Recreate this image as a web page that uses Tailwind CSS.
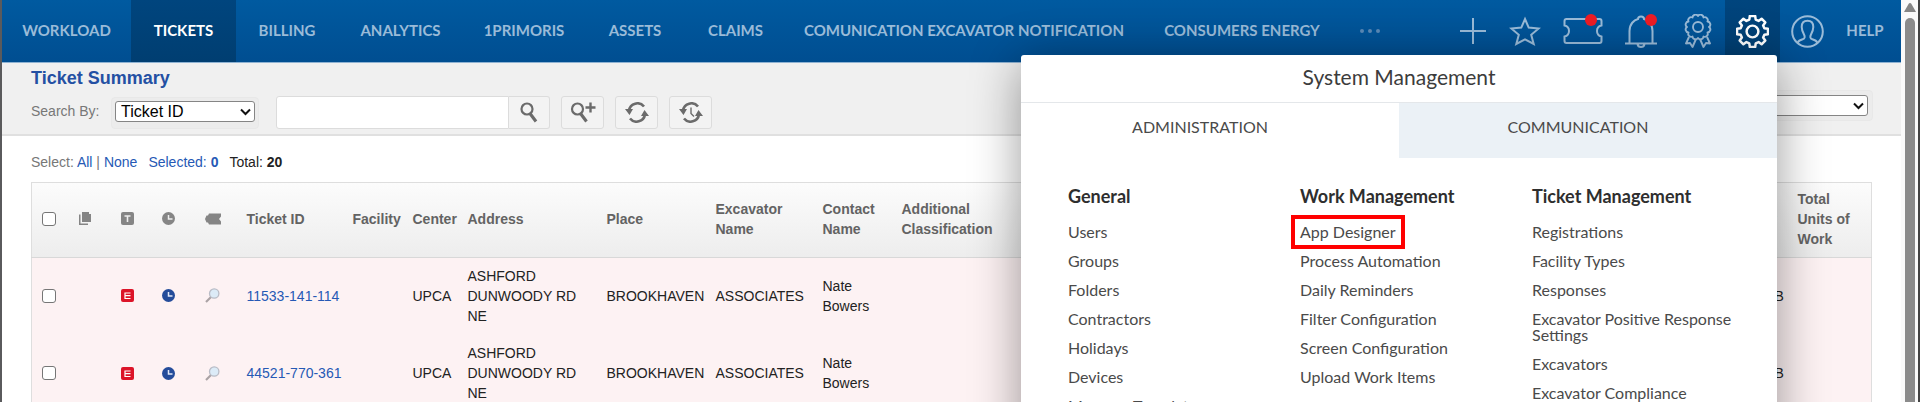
<!DOCTYPE html>
<html lang="en">
<head>
  <meta charset="UTF-8" />
  <meta name="viewport" content="width=device-width, initial-scale=1.0" />
  <title>Ticket Summary</title>
  <script src="https://cdn.jsdelivr.net/npm/@tailwindcss/browser@4"></script>
</head>
<body class="flex h-screen overflow-hidden bg-white text-sm text-[#222] font-['Liberation_Sans',Arial,sans-serif]">
  <div class="w-[2px] shrink-0 bg-[#5a5a5c]"></div>

  <div class="relative flex flex-col min-w-0 grow overflow-hidden">
    <header class="flex shrink-0 h-[63px] border-b border-[#8fb3d3] bg-linear-to-b from-[#005aa0] to-[#004e91] text-[#9abbd8] text-[15px] font-bold font-['Lato',sans-serif]">
      <nav class="flex whitespace-nowrap">
        <a href="#" class="flex items-center justify-center w-[129px]">WORKLOAD</a>
        <a href="#" class="flex items-center justify-center w-[105px] bg-linear-to-b from-[#00457e] to-[#003e71] text-white">TICKETS</a>
        <a href="#" class="flex items-center justify-center w-[102px]">BILLING</a>
        <a href="#" class="flex items-center justify-center w-[125px]">ANALYTICS</a>
        <a href="#" class="flex items-center justify-center w-[122px]">1PRIMORIS</a>
        <a href="#" class="flex items-center justify-center w-[100px]">ASSETS</a>
        <a href="#" class="flex items-center justify-center w-[101px]">CLAIMS</a>
        <a href="#" class="flex items-center justify-center w-[356px]">COMUNICATION EXCAVATOR NOTIFICATION</a>
        <a href="#" class="flex items-center justify-center w-[200px]">CONSUMERS ENERGY</a>
        <button aria-label="More" class="flex items-center justify-center gap-1 w-[56px]">
          <span class="size-1 rounded-full bg-[#5b8ab8]"></span>
          <span class="size-1 rounded-full bg-[#5b8ab8]"></span>
          <span class="size-1 rounded-full bg-[#5b8ab8]"></span>
        </button>
      </nav>
      <div class="flex ml-auto pr-[6px]">
        <button aria-label="Add" class="flex items-center justify-center w-[47px]">
          <svg class="w-[26px] h-[26px]" viewBox="0 0 26 26" fill="none" stroke="currentColor" stroke-width="2"><path d="M13 0v26M0 13h26" /></svg>
        </button>
        <button aria-label="Favorites" class="flex items-center justify-center w-[58px]">
          <svg class="w-[32px] h-[30px]" viewBox="0 0 32 30" fill="none" stroke="currentColor" stroke-width="2"><path d="M16 3l3.700 8.600 10 .9-7.500 6.300 2.500 9.200L16 23.300 7.300 28l2.500-9.200-7.500-6.300 10-.9z" /></svg>
        </button>
        <button aria-label="Tickets" class="relative flex items-center justify-center w-[58px]">
          <svg class="w-[40px] h-[28px]" viewBox="0 0 40 28" fill="none" stroke="currentColor" stroke-width="2"><path d="M3.500 2h33q2 0 2 2v4.500q-4.500 1-4.500 5.500t4.500 5.500V24q0 2-2 2h-33q-2 0-2-2v-4.500q4.500-1 4.500-5.500T1.500 8.500V4q0-2 2-2z" /></svg>
          <span class="absolute top-[14px] left-[31px] size-[12px] rounded-full bg-[#ee1c25]"></span>
        </button>
        <button aria-label="Notifications" class="relative flex items-center justify-center w-[58px]">
          <svg class="w-[32px] h-[33px]" viewBox="0 0 32 33" fill="none" stroke="currentColor" stroke-width="2"><path d="M0 28.500h32M4.500 28V16C4.500 9 9 5 13 4q0-2.500 3-2.500T19 4c4 1 8.500 5 8.500 12v12M12.500 29q.5 3 3.500 3t3.500-3" /></svg>
          <span class="absolute top-[14px] left-[33px] size-[12px] rounded-full bg-[#ee1c25]"></span>
        </button>
        <button aria-label="Certifications" class="flex items-center justify-center w-[55px]">
          <svg class="w-[28px] h-[34px]" viewBox="0 0 28 34" fill="none" stroke="currentColor" stroke-width="1.900" stroke-linejoin="round">
            <path d="M14 2a3 3 0 0 1 5.500 1.500 3 3 0 0 1 4 4A3 3 0 0 1 25 13a3 3 0 0 1-1.500 5.500 3 3 0 0 1-4 4A3 3 0 0 1 14 24a3 3 0 0 1-5.500-1.500 3 3 0 0 1-4-4A3 3 0 0 1 3 13a3 3 0 0 1 1.500-5.500 3 3 0 0 1 4-4A3 3 0 0 1 14 2z" />
            <circle cx="14" cy="13" r="5" />
            <path d="M5 23l-3 6.500 4-.5 2.500 4 3.500-8M23 23l3 6.500-4-.5-2.500 4-3.500-8" />
          </svg>
        </button>
        <button aria-label="System management" class="flex items-center justify-center w-[55px] bg-linear-to-b from-[#00457e] to-[#003e71] text-white">
          <svg class="w-[33px] h-[33px]" viewBox="0 0 32 32" fill="none" stroke="currentColor" stroke-width="2.400" stroke-linejoin="round">
            <path d="M13.400 1h5.200l.5 3.500 2.800 1.200 2.900-2.100 3.600 3.600-2.100 2.900 1.200 2.800 3.500.5v5.200l-3.500.5-1.200 2.800 2.100 2.900-3.600 3.600-2.900-2.100-2.800 1.200-.5 3.500h-5.200l-.5-3.500-2.800-1.200-2.900 2.100-3.600-3.600 2.100-2.900-1.200-2.800L1 18.600v-5.200l3.500-.5 1.200-2.800-2.100-2.900 3.600-3.600 2.900 2.100 2.800-1.200z" />
            <circle cx="16" cy="16" r="5.700" />
          </svg>
        </button>
        <button aria-label="Account" class="flex items-center justify-center w-[55px]">
          <svg class="w-[33px] h-[33px]" viewBox="0 0 33 33" fill="none" stroke="currentColor" stroke-width="2">
            <circle cx="16.500" cy="16.500" r="15.300" />
            <path d="M6.500 28c1-2.500 3-3.300 5.200-3.800 2.400-.6 2.300-2.700 1.300-4.700-1.600-3-2.300-5-2.300-7.500 0-4 2.300-6.200 5.800-6.200s5.800 2.200 5.800 6.200c0 2.500-.7 4.500-2.300 7.500-1 2-1.100 4.100 1.300 4.700 2.200.5 4.200 1.300 5.200 3.800" />
          </svg>
        </button>
        <a href="#" class="flex items-center justify-center w-[60px]">HELP</a>
      </div>
    </header>

    <section class="flex justify-between shrink-0 h-[73px] pl-[29px] pr-[28px] border-b-2 border-[#e0e0e0] bg-[#f0f0f0]">
      <div>
        <h1 class="pt-[3px] text-lg leading-6 font-bold text-[#2450a3]">Ticket Summary</h1>
        <div class="flex items-center mt-[6px]">
          <label for="searchBy" class="w-[80px] pb-1 text-[#777]">Search By:</label>
          <div class="w-[148px] h-[32px] p-[3px] border border-[#e8e8e8] rounded-sm bg-[#ececec]">
            <div class="relative">
              <select id="searchBy" class="appearance-none block w-full h-[21px] pl-[5px] text-base leading-[19px] text-black bg-white border border-[#858585] rounded-[3px]">
                <option>Ticket ID</option>
              </select>
              <svg class="absolute right-1 top-[7px] w-[11px] h-[8px] pointer-events-none" viewBox="0 0 11 8" fill="none" stroke="#111" stroke-width="2"><path d="M1 1.500l4.500 4.500L10 1.500" /></svg>
            </div>
          </div>
          <input type="text" aria-label="Search text" class="w-[233px] h-[33px] ml-[17px] px-2 bg-white border border-[#dcdcdc] rounded-l-[3px]" />
          <button aria-label="Search" class="flex items-center justify-center w-[41px] h-[33px] border border-l-0 border-[#dcdcdc] rounded-r-[3px] bg-[#f3f3f3]">
            <svg class="w-[18px] h-[21px]" viewBox="0 0 18 21" fill="none" stroke="#6b6b6b" stroke-width="2.200"><circle cx="7" cy="7" r="5.500" /><path d="M10 11.500l6 8" stroke-width="3.200" /></svg>
          </button>
          <button aria-label="Advanced search" class="flex items-center justify-center w-[43px] h-[33px] ml-[11px] border border-[#dcdcdc] rounded-[3px] bg-[#f3f3f3]">
            <svg class="w-[26px] h-[21px]" viewBox="0 0 26 21" fill="none" stroke="#6b6b6b" stroke-width="2.200"><circle cx="7.500" cy="7" r="5.500" /><path d="M10.500 11.500l6 8" stroke-width="3.200" /><path d="M20.500 .5v10M15.500 5.500h10" stroke-width="2.400" /></svg>
          </button>
          <button aria-label="Refresh" class="flex items-center justify-center w-[43px] h-[33px] ml-[11px] border border-[#dcdcdc] rounded-[3px] bg-[#f3f3f3]">
            <svg class="w-[24px] h-[21px]" viewBox="0 0 24 21" fill="none" stroke="#6b6b6b" stroke-width="2.600"><path d="M4 8.500a8.500 8.500 0 0 1 15-4M20 12.500a8.500 8.500 0 0 1-15 4" /><path d="M0 7h8l-3.500 6zM24 14h-8l3.500-6z" fill="#6b6b6b" stroke="none" /></svg>
          </button>
          <button aria-label="Auto refresh" class="flex items-center justify-center w-[43px] h-[33px] ml-[11px] border border-[#dcdcdc] rounded-[3px] bg-[#f3f3f3]">
            <svg class="w-[24px] h-[21px]" viewBox="0 0 24 21" fill="none" stroke="#6b6b6b" stroke-width="2.600"><path d="M4 8.500a8.500 8.500 0 0 1 15-4M20 12.500a8.500 8.500 0 0 1-15 4" /><path d="M0 7h8l-3.500 6zM24 14h-8l3.500-6z" fill="#6b6b6b" stroke="none" /><path d="M12 5.500v6l3 3" stroke-width="1.400" /></svg>
          </button>
        </div>
      </div>
      <div class="w-[240px] h-[31px] mt-[27px] p-1 border border-[#e8e8e8] rounded-sm bg-[#ececec]">
        <div class="relative">
          <select aria-label="Saved view" class="appearance-none block w-full h-[21px] bg-white border border-[#858585] rounded-[3px]"><option></option></select>
          <svg class="absolute right-1 top-[7px] w-[11px] h-[8px] pointer-events-none" viewBox="0 0 11 8" fill="none" stroke="#111" stroke-width="2"><path d="M1 1.500l4.500 4.500L10 1.500" /></svg>
        </div>
      </div>
    </section>

    <main class="px-[29px]">
      <p class="flex gap-[11px] pt-4 pb-[10px] leading-5">
        <span class="text-[#777]">Select: <a href="#" class="text-[#2659b5]">All</a> | <a href="#" class="text-[#2659b5]">None</a></span>
        <a href="#" class="text-[#2659b5]">Selected: <b>0</b></a>
        <span>Total: <b>20</b></span>
      </p>

      <table class="w-full table-fixed border-collapse border border-[#dedede] text-left leading-5">
        <colgroup>
          <col class="w-[42px]" />
          <col class="w-[42px]" />
          <col class="w-[41px]" />
          <col class="w-[43px]" />
          <col class="w-[42px]" />
          <col class="w-[106px]" />
          <col class="w-[60px]" />
          <col class="w-[55px]" />
          <col class="w-[139px]" />
          <col class="w-[109px]" />
          <col class="w-[107px]" />
          <col class="w-[79px]" />
          <col class="w-[134px]" />
          <col />
          <col class="w-[69px]" />
          <col class="w-[79px]" />
        </colgroup>
        <thead>
          <tr class="h-[75px] border-b border-[#d8d8d8] bg-linear-to-b from-[#fcfcfc] to-[#ededed] text-[#636363]">
            <th class="pb-[3px] pl-[10px]"><input type="checkbox" aria-label="Select all" class="appearance-none block size-[14px] bg-white border border-[#767676] rounded-[3px]" /></th>
            <th class="pb-[3px] pl-[5px]"><svg class="size-[13px]" viewBox="0 0 13 13" fill="#858585"><path d="M3 0h7v2h2v8H3zM0 2.500h1.500v9H9V13H0z" /></svg></th>
            <th class="pb-[3px] pl-[5px]"><svg class="size-[13px]" viewBox="0 0 13 13"><rect width="13" height="13" rx="2" fill="#858585" /><path d="M3.500 4h6M6.500 4v6" stroke="#eee" stroke-width="1.600" /></svg></th>
            <th class="pb-[3px] pl-[5px]"><svg class="size-[13px]" viewBox="0 0 13 13"><circle cx="6.500" cy="6.500" r="6.500" fill="#858585" /><path d="M6.500 3v4h4" fill="none" stroke="#eee" stroke-width="1.500" /></svg></th>
            <th class="pb-[3px] pl-[5px]"><svg class="w-[16px] h-[12px]" viewBox="0 0 16 12" fill="#858585"><path d="M4 .5h12v3L14 6l2 2.500v3H4l-1-2H1.500L0 6l1.500-3.500H3z" /></svg></th>
            <th class="pb-[3px] pl-[5px]">Ticket ID</th>
            <th class="pb-[3px] pl-[5px]">Facility</th>
            <th class="pb-[3px] pl-[5px]">Center</th>
            <th class="pb-[3px] pl-[5px]">Address</th>
            <th class="pb-[3px] pl-[5px]">Place</th>
            <th class="pb-[3px] pl-[5px]">Excavator Name</th>
            <th class="pb-[3px] pl-[5px]">Contact Name</th>
            <th class="pb-[3px] pl-[5px]">Additional Classification</th>
            <th></th>
            <th class="pb-[3px] pl-[5px]">County</th>
            <th class="pb-[3px] pl-[5px] pr-2">Total Units of Work</th>
          </tr>
        </thead>
        <tbody>
          <tr class="h-[78px] bg-[#fdf2f3]">
            <td class="pb-[2px] pl-[10px]"><input type="checkbox" aria-label="Select 11533-141-114" class="appearance-none block size-[14px] bg-white border border-[#767676] rounded-[3px]" /></td>
            <td></td>
            <td class="pb-[2px] pl-[5px]"><svg class="size-[13px]" viewBox="0 0 13 13"><rect width="13" height="13" rx="2" fill="#dc1428" /><path d="M9.500 4H4v5.500h5.500M4 6.700h5.500" fill="none" stroke="#fff" stroke-width="1.200" /></svg></td>
            <td class="pb-[2px] pl-[5px]"><svg class="size-[13px]" viewBox="0 0 13 13"><circle cx="6.500" cy="6.500" r="6.500" fill="#244c9a" /><path d="M6.500 3v4h4" fill="none" stroke="#dfe8f8" stroke-width="1.500" /></svg></td>
            <td class="pb-[2px] pl-[5px]"><svg class="size-[15px]" viewBox="0 0 15 15"><path d="M6 9l-5 5" stroke="#aaa2a4" stroke-width="2.200" /><circle cx="9.200" cy="5.500" r="4.700" fill="#dcebf7" stroke="#b9bcc6" stroke-width="1.300" /></svg></td>
            <td class="pb-[2px] pl-[5px]"><a href="#" class="text-[#2659b5]">11533-141-114</a></td>
            <td></td>
            <td class="pb-[2px] pl-[5px]">UPCA</td>
            <td class="pb-[2px] pl-[5px] pr-5">ASHFORD DUNWOODY RD NE</td>
            <td class="pb-[2px] pl-[5px]">BROOKHAVEN</td>
            <td class="pb-[2px] pl-[5px]">ASSOCIATES</td>
            <td class="pb-[2px] pl-[5px] pr-3">Nate Bowers</td>
            <td></td>
            <td></td>
            <td class="pb-[2px] pl-[5px]">DEKALB</td>
            <td></td>
          </tr>
          <tr class="h-[78px] bg-[#fdf2f3]">
            <td class="pb-[2px] pl-[10px]"><input type="checkbox" aria-label="Select 44521-770-361" class="appearance-none block size-[14px] bg-white border border-[#767676] rounded-[3px]" /></td>
            <td></td>
            <td class="pb-[2px] pl-[5px]"><svg class="size-[13px]" viewBox="0 0 13 13"><rect width="13" height="13" rx="2" fill="#dc1428" /><path d="M9.500 4H4v5.500h5.500M4 6.700h5.500" fill="none" stroke="#fff" stroke-width="1.200" /></svg></td>
            <td class="pb-[2px] pl-[5px]"><svg class="size-[13px]" viewBox="0 0 13 13"><circle cx="6.500" cy="6.500" r="6.500" fill="#244c9a" /><path d="M6.500 3v4h4" fill="none" stroke="#dfe8f8" stroke-width="1.500" /></svg></td>
            <td class="pb-[2px] pl-[5px]"><svg class="size-[15px]" viewBox="0 0 15 15"><path d="M6 9l-5 5" stroke="#aaa2a4" stroke-width="2.200" /><circle cx="9.200" cy="5.500" r="4.700" fill="#dcebf7" stroke="#b9bcc6" stroke-width="1.300" /></svg></td>
            <td class="pb-[2px] pl-[5px]"><a href="#" class="text-[#2659b5]">44521-770-361</a></td>
            <td></td>
            <td class="pb-[2px] pl-[5px]">UPCA</td>
            <td class="pb-[2px] pl-[5px] pr-5">ASHFORD DUNWOODY RD NE</td>
            <td class="pb-[2px] pl-[5px]">BROOKHAVEN</td>
            <td class="pb-[2px] pl-[5px]">ASSOCIATES</td>
            <td class="pb-[2px] pl-[5px] pr-3">Nate Bowers</td>
            <td></td>
            <td></td>
            <td class="pb-[2px] pl-[5px]">DEKALB</td>
            <td></td>
          </tr>
        </tbody>
      </table>
    </main>

    <!-- System Management menu, opened from the gear -->
    <div class="absolute top-[55px] right-[124px] w-[756px] pb-10 rounded-[3px] bg-white text-base leading-4 text-[#4a4a4a] shadow-[0_8px_50px_rgba(0,0,0,0.4)] font-['Lato',sans-serif]">
      <h2 class="h-[48px] pt-[10px] border-b border-[#e4e7ea] text-center text-[21px] leading-6 text-[#3c3c3c]">System Management</h2>
      <div class="grid grid-cols-2 h-[55px]">
        <button class="pb-2 pr-5">ADMINISTRATION</button>
        <button class="pb-2 pr-5 bg-[#ebf1f6]">COMMUNICATION</button>
      </div>
      <div class="grid grid-cols-3 pt-[28px] pl-[47px] pr-[13px]">
        <div class="flex flex-col items-start gap-[13px]">
          <h3 class="mb-[5px] text-lg leading-5 font-bold text-[#2e2e2e]">General</h3>
          <a href="#">Users</a>
          <a href="#">Groups</a>
          <a href="#">Folders</a>
          <a href="#">Contractors</a>
          <a href="#">Holidays</a>
          <a href="#">Devices</a>
          <a href="#">Message Templates</a>
        </div>
        <div class="flex flex-col items-start gap-[13px]">
          <h3 class="mb-[5px] text-lg leading-5 font-bold text-[#2e2e2e]">Work Management</h3>
          <a href="#" class="outline-4 outline-[#ff0000] outline-offset-5">App Designer</a>
          <a href="#">Process Automation</a>
          <a href="#">Daily Reminders</a>
          <a href="#">Filter Configuration</a>
          <a href="#">Screen Configuration</a>
          <a href="#">Upload Work Items</a>
        </div>
        <div class="flex flex-col items-start gap-[13px] pr-3">
          <h3 class="mb-[5px] text-lg leading-5 font-bold text-[#2e2e2e]">Ticket Management</h3>
          <a href="#">Registrations</a>
          <a href="#">Facility Types</a>
          <a href="#">Responses</a>
          <a href="#">Excavator Positive Response Settings</a>
          <a href="#">Excavators</a>
          <a href="#">Excavator Compliance</a>
        </div>
      </div>
    </div>
  </div>

  <div class="flex flex-col items-center shrink-0 w-[17px] bg-[#fafafa]">
    <svg class="w-[12px] h-[9px] mt-[3px]" viewBox="0 0 12 9" fill="#858585"><path d="M6 0q.8 0 1.300.8L12 9H0L4.700.8Q5.200 0 6 0z" /></svg>
    <div class="w-[10px] grow mt-[6px] rounded-t-full bg-[#8b8b8b]"></div>
  </div>
  <div class="w-[2px] shrink-0 bg-[#444]"></div>
</body>
</html>
